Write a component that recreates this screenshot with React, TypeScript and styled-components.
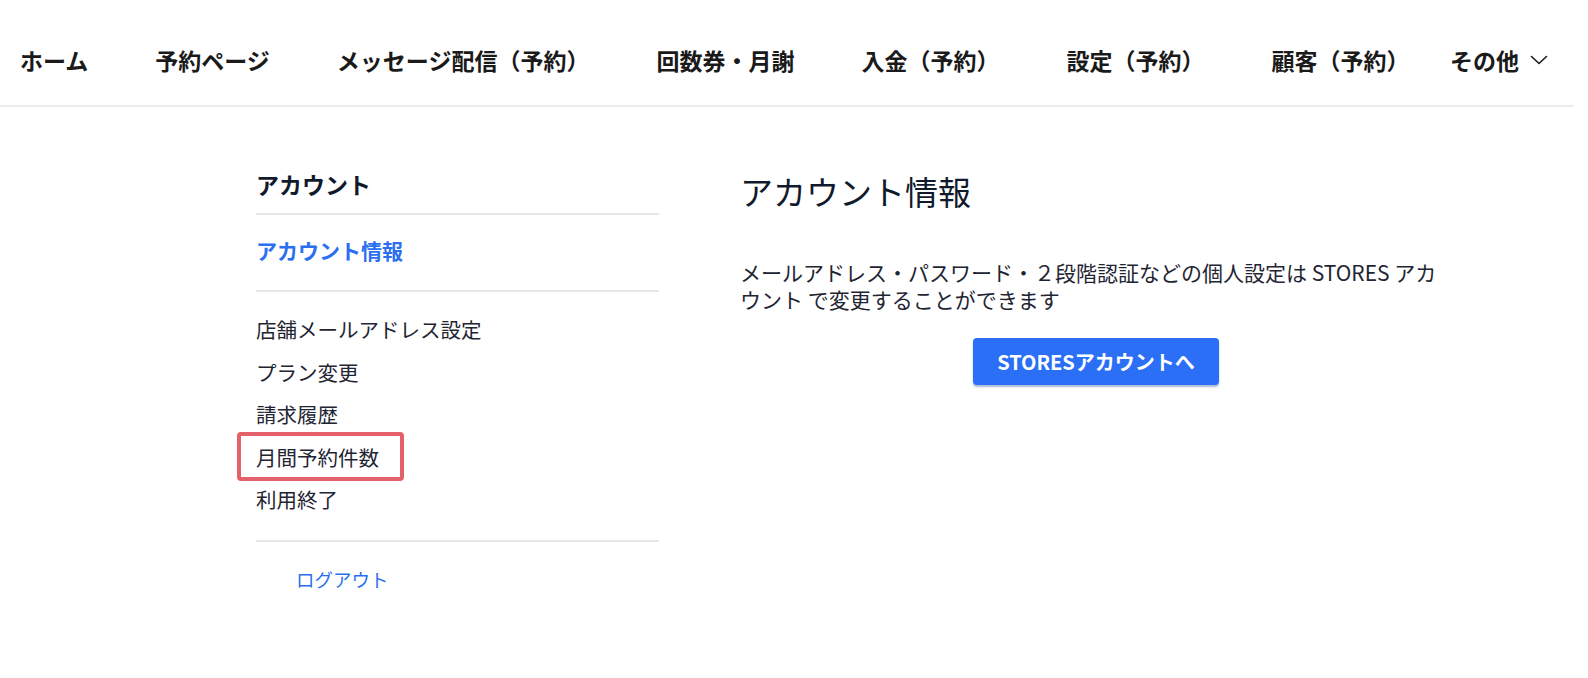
import styled, { createGlobalStyle } from "styled-components";

const GlobalStyle = createGlobalStyle`
  body {
    margin: 0;
    background: #ffffff;
    font-family: "Noto Sans CJK JP", "Noto Sans", sans-serif;
    color: #1c2230;
  }
`;

const Header = styled.header`
  width: 1574px;
  height: 107px;
  box-sizing: border-box;
  border-bottom: 2px solid #ececec;
  display: flex;
  align-items: center;
  justify-content: space-between;
  padding: 15px 26px 0 20px;
`;

const NavList = styled.div`
  display: flex;
  align-items: center;
  gap: 67px;
`;

const NavItem = styled.a`
  display: flex;
  align-items: center;
  font-size: 23px;
  font-weight: 700;
  color: #1a1a1a;
  text-decoration: none;
  line-height: 1;
  cursor: pointer;
`;

const MoreMenu = styled(NavItem)`
  gap: 11px;
`;

const Page = styled.div`
  display: flex;
  gap: 81px;
  padding: 62px 0 0 256px;
`;

const Sidebar = styled.nav`
  width: 403px;
  flex-shrink: 0;
`;

const SideHeading = styled.h3`
  margin: 0;
  font-size: 23px;
  font-weight: 700;
  line-height: 30px;
  color: #111a2c;
  padding-bottom: 14px;
  border-bottom: 2px solid #e6e6e6;
`;

const ActiveItem = styled.a`
  display: block;
  font-size: 21px;
  font-weight: 700;
  line-height: 30px;
  color: #2b6ff0;
  padding: 20px 0 25px;
  border-bottom: 2px solid #e6e6e6;
`;

const ItemList = styled.ul`
  list-style: none;
  margin: 0;
  padding: 16px 0 19px;
  border-bottom: 2px solid #e6e6e6;
`;

const Item = styled.li`
  position: relative;
  font-size: 20.5px;
  line-height: 42.5px;
  color: #1f2533;
  cursor: pointer;
`;

const Marker = styled.span`
  position: absolute;
  left: -19px;
  top: -4px;
  width: 167px;
  height: 49px;
  box-sizing: border-box;
  border: 4px solid #e4606b;
  border-radius: 4px;
  pointer-events: none;
`;

const Logout = styled.a`
  display: block;
  padding: 23px 0 0 40px;
  font-size: 18.5px;
  line-height: 28px;
  color: #2b6ff0;
  cursor: pointer;
`;

const Main = styled.main`
  width: 712px;
  display: flex;
  flex-direction: column;
`;

const Title = styled.h1`
  margin: 0;
  font-size: 33px;
  font-weight: 400;
  line-height: 44px;
  color: #111a2c;
`;

const Description = styled.p`
  margin: 46px 0 0;
  max-width: 708px;
  font-size: 21px;
  line-height: 27px;
  color: #1f2533;
`;

const Button = styled.button`
  align-self: center;
  margin-top: 25px;
  width: 246px;
  height: 47px;
  border: none;
  border-radius: 4px;
  background: #2a6ff5;
  box-shadow: 0 2px 2px rgba(20, 60, 140, 0.35);
  color: #ffffff;
  font-family: inherit;
  font-size: 20px;
  font-weight: 700;
  cursor: pointer;
`;

const navItems = [
  "ホーム",
  "予約ページ",
  "メッセージ配信（予約）",
  "回数券・月謝",
  "入金（予約）",
  "設定（予約）",
  "顧客（予約）",
];

const menuItems = [
  "店舗メールアドレス設定",
  "プラン変更",
  "請求履歴",
  "月間予約件数",
  "利用終了",
];

const Chevron = () => (
  <svg width="18" height="10" viewBox="0 0 18 10" fill="none">
    <polyline points="1.5,1.5 9,8.5 16.5,1.5" stroke="#1a1a1a" strokeWidth="1.6" strokeLinecap="round" strokeLinejoin="round" />
  </svg>
);

const App = () => {
  return (
    <>
      <GlobalStyle />
      <Header>
        <NavList>
          {navItems.map((label) => (
            <NavItem key={label}>{label}</NavItem>
          ))}
        </NavList>
        <MoreMenu>
          <span>その他</span>
          <Chevron />
        </MoreMenu>
      </Header>
      <Page>
        <Sidebar>
          <SideHeading>アカウント</SideHeading>
          <ActiveItem>アカウント情報</ActiveItem>
          <ItemList>
            {menuItems.map((label) => (
              <Item key={label}>
                {label}
                {label === "月間予約件数" && <Marker />}
              </Item>
            ))}
          </ItemList>
          <Logout>ログアウト</Logout>
        </Sidebar>
        <Main>
          <Title>アカウント情報</Title>
          <Description>
            メールアドレス・パスワード・２段階認証などの個人設定は STORES アカウント で変更することができます
          </Description>
          <Button>STORESアカウントへ</Button>
        </Main>
      </Page>
    </>
  );
};

export default App;
